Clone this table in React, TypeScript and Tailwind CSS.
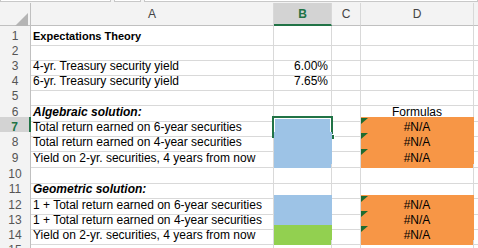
import React from 'react';

type Row = {
  n: number;
  h: string;
  a?: string;
  aStyle?: string;
  b?: string;
  bFill?: 'blue' | 'green';
  d?: string;
  dFill?: boolean;
};

const rows: Row[] = [
  { n: 1, h: 'h-[15px]', a: 'Expectations Theory', aStyle: 'font-bold text-[11px]' },
  { n: 2, h: 'h-[15px]' },
  { n: 3, h: 'h-[15px]', a: '4-yr. Treasury security yield', b: '6.00%' },
  { n: 4, h: 'h-[15px]', a: '6-yr. Treasury security yield', b: '7.65%' },
  { n: 5, h: 'h-[16px]' },
  { n: 6, h: 'h-[15px]', a: 'Algebraic solution:', aStyle: 'font-bold italic', d: 'Formulas' },
  { n: 7, h: 'h-[15px]', a: 'Total return earned on 6-year securities', bFill: 'blue', d: '#N/A', dFill: true },
  { n: 8, h: 'h-[16px]', a: 'Total return earned on 4-year securities', bFill: 'blue', d: '#N/A', dFill: true },
  { n: 9, h: 'h-[16px]', a: 'Yield on 2-yr. securities, 4 years from now', bFill: 'blue', d: '#N/A', dFill: true },
  { n: 10, h: 'h-[15px]' },
  { n: 11, h: 'h-[16px]', a: 'Geometric solution:', aStyle: 'font-bold italic' },
  { n: 12, h: 'h-[15px]', a: '1 + Total return earned on 6-year securities', bFill: 'blue', d: '#N/A', dFill: true },
  { n: 13, h: 'h-[15px]', a: '1 + Total return earned on 4-year securities', bFill: 'blue', d: '#N/A', dFill: true },
  { n: 14, h: 'h-[15px]', a: 'Yield on 2-yr. securities, 4 years from now', bFill: 'green', d: '#N/A', dFill: true },
  { n: 15, h: 'h-[15px]' },
];

const cols = 'grid grid-cols-[31px_243px_58px_29px_113px_1fr]';

function Triangle() {
  return (
    <svg className="absolute left-0 top-[1px]" width="7" height="6" viewBox="0 0 7 6">
      <polygon points="0,0 7,0 0,6" fill="#1e6b2f" />
    </svg>
  );
}

export default function App() {
  return (
    <div className="w-[478px] h-[248px] overflow-hidden bg-white text-[12px] text-black font-['Liberation_Sans',Arial,sans-serif]">
      {/* formula bar remnants */}
      <div className="flex gap-[3px] h-[3px] bg-[#f3f3f3]">
        <div className="w-[111px] h-[2px] bg-white border border-t-0 border-[#c8c8c8]" />
        <div className="w-[27px] h-[2px] bg-white border border-t-0 border-[#c8c8c8]" />
        <div className="flex-1 h-[2px] bg-white border border-t-0 border-[#c8c8c8]" />
      </div>

      {/* column headers */}
      <div className={`${cols} h-[23px] bg-[#f3f3f3] text-[#444] text-[12px]`}>
        <div className="relative border-r border-b border-[#c0c0c0]">
          <svg className="absolute left-[15px] top-[10px]" width="13" height="13" viewBox="0 0 13 13">
            <polygon points="13,0 13,13 0,13" fill="#b4b4b4" />
          </svg>
        </div>
        <div className="flex items-center justify-center border-r border-b border-[#c0c0c0] border-r-[#d8d8d8]">A</div>
        <div className="flex items-center justify-center bg-[#d3d3d3] border-r border-[#d8d8d8] border-b-2 border-b-[#217346] text-[#217346] font-bold">B</div>
        <div className="flex items-center justify-center border-r border-b border-[#c0c0c0] border-r-[#d8d8d8]">C</div>
        <div className="flex items-center justify-center border-r border-b border-[#c0c0c0] border-r-[#d8d8d8]">D</div>
        <div className="border-b border-[#c0c0c0]" />
      </div>

      {rows.map((r) => {
        const sel = r.n === 7;
        const bBg =
          r.bFill === 'blue' ? 'bg-[#9dc3e6] border-[#9dc3e6]' : r.bFill === 'green' ? 'bg-[#92d050] border-[#92d050]' : 'border-[#d9d9d9]';
        return (
          <div key={r.n} className={`${cols} ${r.h}`}>
            <div
              className={`flex items-center justify-center pt-px border-b border-[#d9d9d9] ${
                sel
                  ? 'bg-[#d3d3d3] text-[#217346] font-bold border-r-2 border-r-[#217346]'
                  : 'bg-[#f3f3f3] text-[#555] border-r border-r-[#c0c0c0]'
              }`}
            >
              {r.n}
            </div>
            <div className={`flex items-center pl-[2px] pt-px whitespace-nowrap border-r border-b border-[#d9d9d9] ${r.aStyle ?? ''}`}>
              {r.a}
            </div>
            <div className={`relative flex items-center justify-end pr-[3px] pt-px border-r border-b ${bBg}`}>
              {r.b}
              {sel && (
                <div className="absolute -left-[2px] -top-[1px] -right-[2px] -bottom-[2px] border-2 border-[#217346]">
                  <div className="h-full border border-white" />
                  <div className="absolute -right-[4px] -bottom-[4px] w-[6px] h-[6px] bg-[#217346] border border-white" />
                </div>
              )}
            </div>
            <div className="border-r border-b border-[#d9d9d9]" />
            <div
              className={`relative flex items-center justify-center pt-px border-r border-b ${
                r.dFill ? 'bg-[#f79646] border-[#f79646]' : 'border-[#d9d9d9]'
              }`}
            >
              {r.dFill && <Triangle />}
              {r.d}
            </div>
            <div className="border-b border-[#d9d9d9]" />
          </div>
        );
      })}
    </div>
  );
}
